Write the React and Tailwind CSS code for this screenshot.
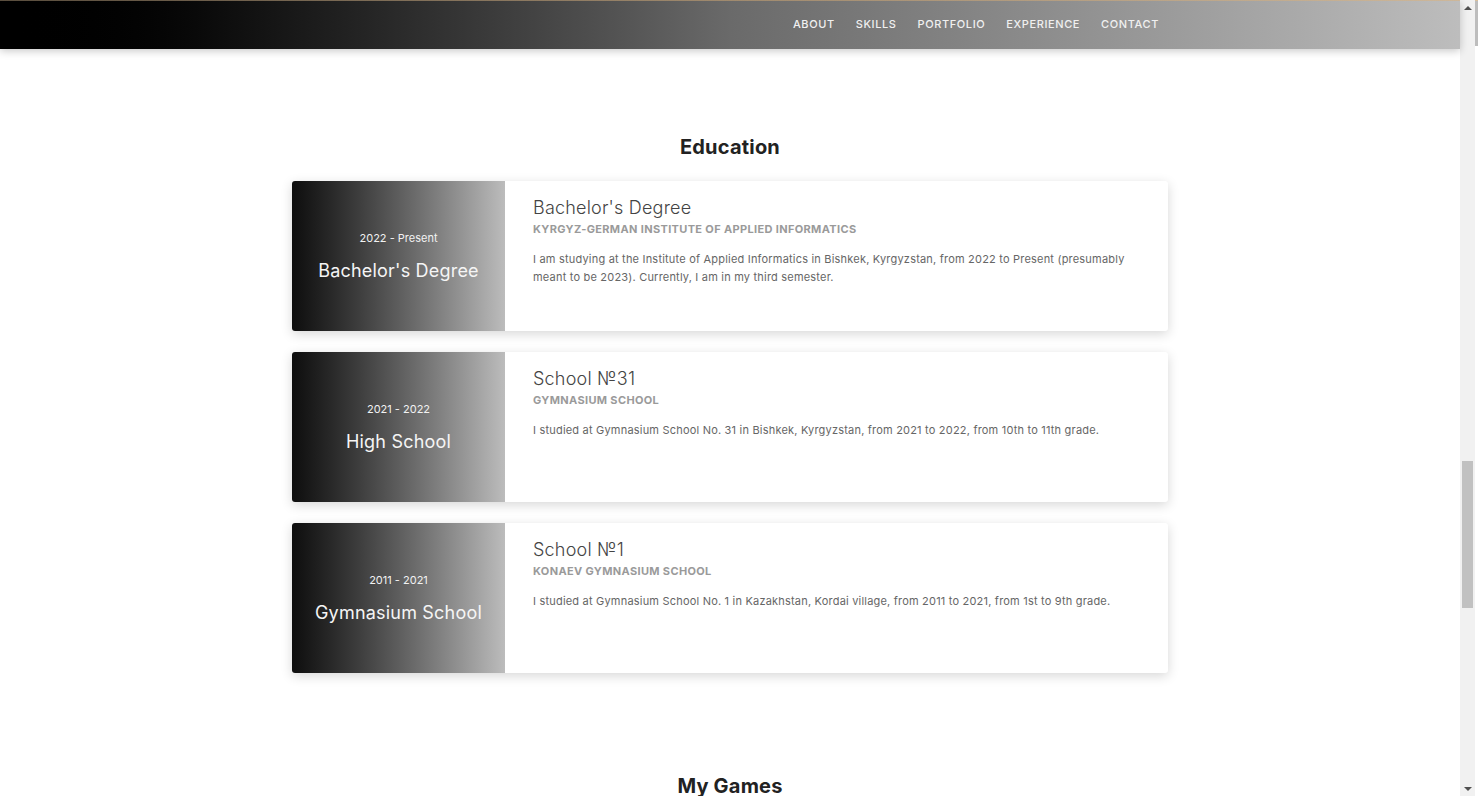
import React from "react";

const items = [
  {
    date: "2022 - Present",
    left: "Bachelor's Degree",
    title: "Bachelor's Degree",
    sub: "KYRGYZ-GERMAN INSTITUTE OF APPLIED INFORMATICS",
    desc: "I am studying at the Institute of Applied Informatics in Bishkek, Kyrgyzstan, from 2022 to Present (presumably meant to be 2023). Currently, I am in my third semester.",
  },
  {
    date: "2021 - 2022",
    left: "High School",
    title: "School №31",
    sub: "GYMNASIUM SCHOOL",
    desc: "I studied at Gymnasium School No. 31 in Bishkek, Kyrgyzstan, from 2021 to 2022, from 10th to 11th grade.",
  },
  {
    date: "2011 - 2021",
    left: "Gymnasium School",
    title: "School №1",
    sub: "KONAEV GYMNASIUM SCHOOL",
    desc: "I studied at Gymnasium School No. 1 in Kazakhstan, Kordai village, from 2011 to 2021, from 1st to 9th grade.",
  },
];

const nav = ["ABOUT", "SKILLS", "PORTFOLIO", "EXPERIENCE", "CONTACT"];

export default function App() {
  return (
    <div
      className="flex w-[1478px] h-[796px] overflow-hidden bg-white"
      style={{ fontFamily: "Inter, 'Open Sans', sans-serif" }}
    >
      <div className="flex flex-col w-[1460px] shrink-0">
        <header className="relative z-10 h-[49px] shrink-0 flex flex-col bg-gradient-to-r from-[#000000] via-[#6a6a6a] to-[#bdbdbd] shadow-[0_2px_8px_rgba(0,0,0,0.22)]">
          <div className="h-[1px] bg-gradient-to-r from-[#5a4e3e] via-[#a08a6e] to-[#cdb79a]" />
          <nav className="flex-1 flex items-center justify-end pr-[301px] gap-[21px] pb-[2px]">
            {nav.map((n) => (
              <span
                key={n}
                className="text-[11px] font-medium tracking-[0.6px] text-[#f0f0f0] leading-none"
              >
                {n}
              </span>
            ))}
          </nav>
        </header>

        <main className="flex flex-col items-center pt-[86px]">
          <h2 className="text-[20px] leading-[24px] font-bold tracking-[0.2px] text-[#222]">Education</h2>
          <div className="mt-[22px] flex flex-col gap-[21px] w-[876px]">
            {items.map((it) => (
              <div
                key={it.title}
                className="flex h-[150px] bg-white rounded-[3px] overflow-hidden shadow-[0_3px_12px_rgba(0,0,0,0.16)]"
              >
                <div className="w-[213px] shrink-0 flex flex-col items-center justify-center bg-gradient-to-r from-[#0e0e0e] to-[#bcbcbc] text-white">
                  <div className="text-[11px] leading-[14px] text-[#f2f2f2]">{it.date}</div>
                  <div className="mt-[15px] text-[18px] leading-[22px] tracking-[0.2px] text-[#f5f5f5]">{it.left}</div>
                </div>
                <div className="flex-1 pl-[28px] pr-[26px] pt-[16px]">
                  <div className="text-[18px] leading-[22px] font-light tracking-[0.2px] text-[#444]">{it.title}</div>
                  <div className="mt-[3px] text-[11px] leading-[14px] font-bold tracking-[0.35px] text-[#9a9a9a]">{it.sub}</div>
                  <p className="mt-[14px] text-[11px] leading-[18px] tracking-[0.2px] text-[#666]">{it.desc}</p>
                </div>
              </div>
            ))}
          </div>
          <h2 className="mt-[101px] text-[20px] leading-[24px] font-bold tracking-[0.2px] text-[#222]">My Games</h2>
        </main>
      </div>

      <div className="w-[15px] shrink-0 bg-[#f1f1f1] flex flex-col items-center">
        <div className="h-[15px] flex items-center justify-center">
          <div className="w-0 h-0 border-l-[4px] border-r-[4px] border-b-[4px] border-l-transparent border-r-transparent border-b-[#505050]" />
        </div>
        <div className="mt-[446px] w-[11px] h-[147px] bg-[#c1c1c1]" />
        <div className="flex-1" />
        <div className="h-[15px] flex items-center justify-center">
          <div className="w-0 h-0 border-l-[4px] border-r-[4px] border-t-[4px] border-l-transparent border-r-transparent border-t-[#505050]" />
        </div>
      </div>
      <div className="w-[3px] shrink-0 flex flex-col">
        <div className="h-[46px] bg-[#bdbdbd] border-t border-[#d8bf9c]" />
      </div>
    </div>
  );
}
